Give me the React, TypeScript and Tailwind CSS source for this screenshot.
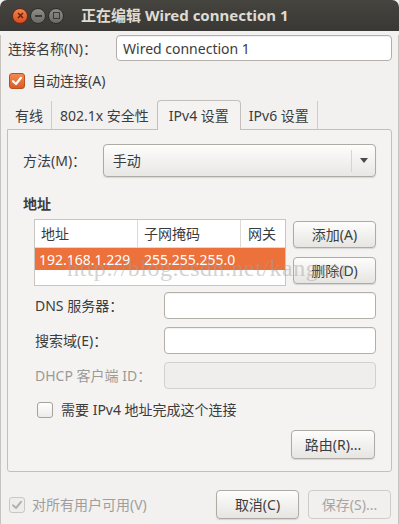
import React from 'react';

const font = { fontFamily: '"Noto Sans", "Noto Sans CJK SC", sans-serif' };

function Btn({ children, className = '', disabled = false }: { children: React.ReactNode; className?: string; disabled?: boolean }) {
  return (
    <div
      className={`flex items-center justify-center rounded-[4px] border text-[14px] ${
        disabled
          ? 'border-[#cfccc7] bg-[#f1f0ef] text-[#a8a6a2]'
          : 'border-[#aeaba5] bg-gradient-to-b from-[#fdfdfc] to-[#e6e5e2] text-[#3c3c3c] shadow-[0_1px_1px_rgba(0,0,0,0.12)]'
      } ${className}`}
    >
      {children}
    </div>
  );
}

function Input({ value = '', disabled = false, className = '' }: { value?: string; disabled?: boolean; className?: string }) {
  return (
    <div
      className={`flex items-center rounded-[4px] border px-[6px] text-[14px] text-[#3c3c3c] ${
        disabled ? 'border-[#d3d1cd] bg-[#efeeed]' : 'border-[#b3b0aa] bg-white shadow-[inset_0_1px_1px_rgba(0,0,0,0.06)]'
      } ${className}`}
    >
      {value}
    </div>
  );
}

function Check({ checked, disabled = false }: { checked: boolean; disabled?: boolean }) {
  if (disabled) {
    return (
      <div className="flex h-[16px] w-[16px] items-center justify-center rounded-[3px] border border-[#c9c7c3] bg-[#eeedec]">
        <svg width="12" height="12" viewBox="0 0 12 12">
          <path d="M2 6.2 L5 9 L10 2.8" fill="none" stroke="#b3b1ad" strokeWidth="2" strokeLinecap="round" strokeLinejoin="round" />
        </svg>
      </div>
    );
  }
  if (checked) {
    return (
      <div className="flex h-[16px] w-[16px] items-center justify-center rounded-[3px] border border-[#b6501f] bg-gradient-to-b from-[#f08a54] to-[#dd5a22]">
        <svg width="12" height="12" viewBox="0 0 12 12">
          <path d="M2 6.2 L5 9 L10 2.8" fill="none" stroke="white" strokeWidth="2.2" strokeLinecap="round" strokeLinejoin="round" />
        </svg>
      </div>
    );
  }
  return <div className="h-[16px] w-[16px] rounded-[3px] border border-[#a5a29c] bg-gradient-to-b from-white to-[#ecebe9]" />;
}

export default function App() {
  return (
    <div className="relative h-[524px] w-[399px] overflow-hidden bg-[#f2f1f0] text-[#3c3c3c]" style={font}>
      {/* Title bar */}
      <div className="flex h-[31px] items-center rounded-t-[7px] bg-gradient-to-b from-[#45443f] to-[#393834] pl-[12px]">
        <div className="flex items-center gap-[2px]">
          <div className="flex h-[16px] w-[16px] items-center justify-center rounded-full border border-[#6b2a12] bg-gradient-to-b from-[#f5844f] to-[#d9491a]">
            <svg width="7" height="7" viewBox="0 0 7 7">
              <path d="M1 1 L6 6 M6 1 L1 6" stroke="#5a2210" strokeWidth="1.4" />
            </svg>
          </div>
          <div className="flex h-[16px] w-[16px] items-center justify-center rounded-full border border-[#2e2d2a] bg-gradient-to-b from-[#8e8c86] to-[#6d6b66]">
            <div className="h-[2px] w-[7px] bg-[#3b3a36]" />
          </div>
          <div className="flex h-[16px] w-[16px] items-center justify-center rounded-full border border-[#2e2d2a] bg-gradient-to-b from-[#8e8c86] to-[#6d6b66]">
            <div className="h-[7px] w-[7px] border border-[#3b3a36]" />
          </div>
        </div>
        <div className="ml-[17px] text-[15px] font-bold text-[#dfdbd2]">正在编辑 Wired connection 1</div>
      </div>

      <div className="border-x border-[#c7c4bf] px-[6px]" style={{ height: 493 }}>
        {/* Name row */}
        <div className="mt-[4px] flex items-center">
          <div className="w-[109px] pl-[1px] text-[14px]">连接名称(N)：</div>
          <Input value="Wired connection 1" className="h-[26px] flex-1" />
        </div>
        <div className="mt-[9px] flex items-center gap-[7px] pl-[2px]">
          <Check checked />
          <span className="text-[14px]">自动连接(A)</span>
        </div>

        {/* Tabs */}
        <div className="mt-[9px] flex h-[29px] items-end text-[14px]">
          <div className="flex h-[28px] items-center border-r border-[#cfccc8] px-[8px]">有线</div>
          <div className="flex h-[28px] items-center px-[8px]">802.1x 安全性</div>
          <div className="relative z-10 -mb-px flex h-[30px] items-center rounded-t-[4px] border border-b-0 border-[#c3c0bb] bg-[#f4f3f2] px-[11px]">IPv4 设置</div>
          <div className="flex h-[28px] items-center border-r border-[#cfccc8] px-[8px]">IPv6 设置</div>
        </div>
        <div className="relative h-[343px] rounded-b-[3px] rounded-tr-[3px] border border-[#c3c0bb] bg-[#f4f3f2] px-[15px]">
          {/* Method */}
          <div className="mt-[14px] flex items-center">
            <div className="w-[80px] text-[14px]">方法(M)：</div>
            <div className="flex h-[33px] w-[274px] items-center rounded-[4px] border border-[#aeaba5] bg-gradient-to-b from-[#fdfdfc] to-[#e8e7e4] shadow-[0_1px_1px_rgba(0,0,0,0.12)]">
              <span className="flex-1 pl-[9px] text-[14px]">手动</span>
              <div className="flex h-[22px] w-[24px] items-center justify-center border-l border-[#d6d4d0]">
                <svg width="8" height="5" viewBox="0 0 8 5">
                  <path d="M0 0 L8 0 L4 5 Z" fill="#4a4a48" />
                </svg>
              </div>
            </div>
          </div>

          <div className="mt-[16px] text-[14px] font-bold">地址</div>

          {/* Address table + buttons */}
          <div className="mt-[5px] flex pl-[11px]">
            <div className="h-[67px] w-[254px] border border-[#c9c6c1] bg-white text-[14px]">
              <div className="flex h-[28px] items-center border-b border-[#dcdad6]">
                <div className="flex h-full w-[103px] items-center border-r border-[#dcdad6] pl-[6px]">地址</div>
                <div className="flex h-full w-[103px] items-center border-r border-[#dcdad6] pl-[6px]">子网掩码</div>
                <div className="pl-[7px]">网关</div>
              </div>
              <div className="flex h-[22px] items-center bg-[#ec713b] text-white">
                <div className="w-[103px] pl-[4px]">192.168.1.229</div>
                <div className="pl-[6px]">255.255.255.0</div>
              </div>
            </div>
            <div className="ml-[7px] flex flex-col gap-[9px] pt-[2px]">
              <Btn className="h-[27px] w-[83px]">添加(A)</Btn>
              <Btn className="h-[27px] w-[83px]">删除(D)</Btn>
            </div>
          </div>

          {/* Fields */}
          <div className="mt-[6px] flex flex-col gap-[8px] pl-[12px] text-[14px]">
            <div className="flex items-center">
              <div className="w-[130px]">DNS 服务器：</div>
              <Input className="h-[27px] w-[213px]" />
            </div>
            <div className="flex items-center">
              <div className="w-[130px]">搜索域(E)：</div>
              <Input className="h-[27px] w-[213px]" />
            </div>
            <div className="flex items-center">
              <div className="w-[130px] text-[#9c9a96]">DHCP 客户端 ID：</div>
              <Input disabled className="h-[27px] w-[213px]" />
            </div>
          </div>

          <div className="mt-[10px] flex items-center gap-[8px] pl-[14px] text-[14px]">
            <Check checked={false} />
            <span>需要 IPv4 地址完成这个连接</span>
          </div>

          <div className="mt-[10px] flex justify-end pr-[1px]">
            <Btn className="h-[29px] w-[84px]">路由(R)...</Btn>
          </div>
        </div>

        {/* Footer */}
        <div className="mt-[18px] flex items-center pr-[1px]">
          <div className="flex flex-1 items-center gap-[7px] pl-[2px]">
            <Check checked disabled />
            <span className="text-[14px] text-[#a09e9a]">对所有用户可用(V)</span>
          </div>
          <Btn className="h-[29px] w-[83px]">取消(C)</Btn>
          <Btn disabled className="ml-[9px] h-[29px] w-[83px]">保存(S)...</Btn>
        </div>
      </div>

      {/* Watermark */}
      <div
        className="pointer-events-none absolute left-[67px] top-[250px] text-[24px] tracking-[0.5px] text-[#a0a0a0] opacity-45"
        style={{ fontFamily: '"Liberation Serif", serif' }}
      >
        http://blog.csdn.net/kangear
      </div>
    </div>
  );
}
